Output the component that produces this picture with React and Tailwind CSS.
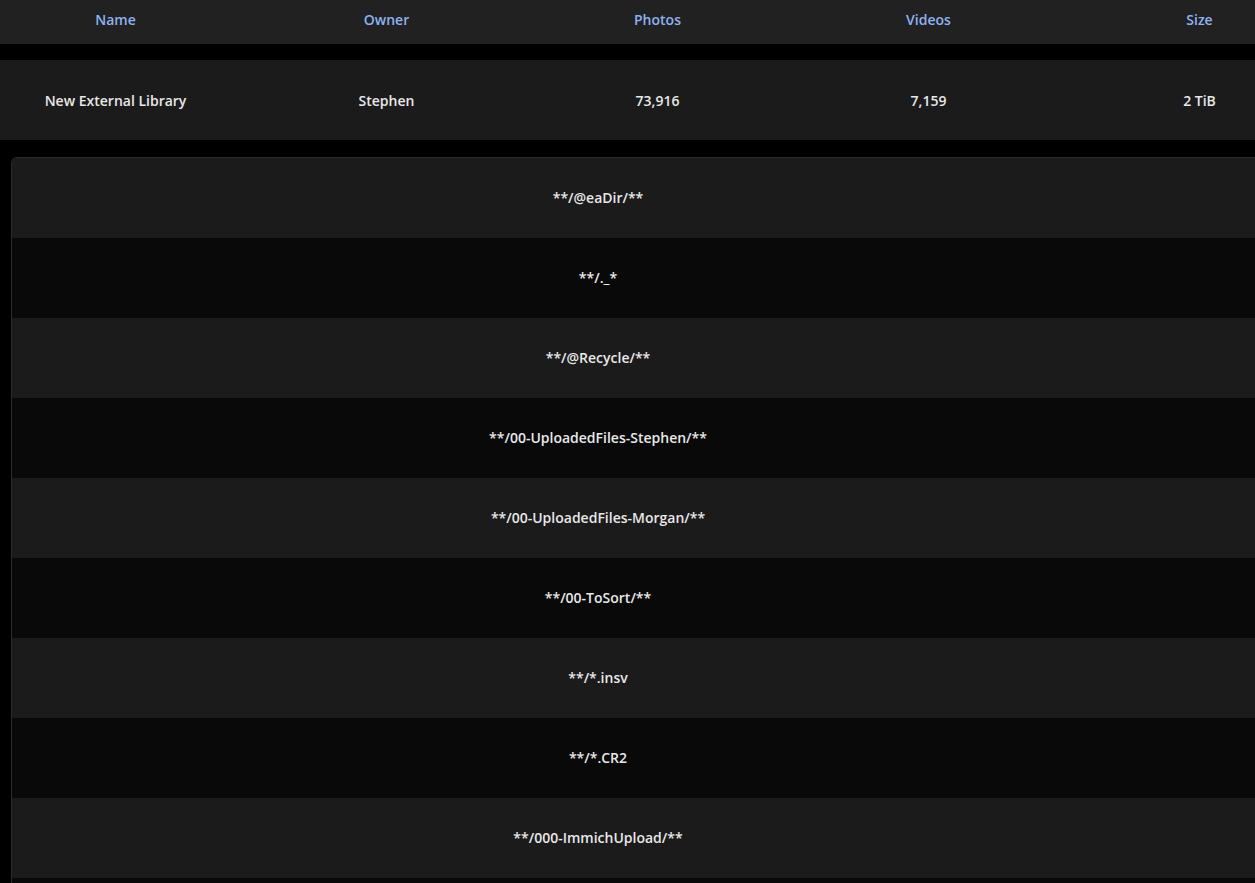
import React from "react";

const library = {
  name: "New External Library",
  owner: "Stephen",
  photos: "73,916",
  videos: "7,159",
  size: "2 TiB",
};

const patterns = [
  "**/@eaDir/**",
  "**/._*",
  "**/@Recycle/**",
  "**/00-UploadedFiles-Stephen/**",
  "**/00-UploadedFiles-Morgan/**",
  "**/00-ToSort/**",
  "**/*.insv",
  "**/*.CR2",
  "**/000-ImmichUpload/**",
];

const headers = ["Name", "Owner", "Photos", "Videos", "Size"];

export default function App() {
  return (
    <div
      className="h-screen overflow-hidden bg-black text-[#e8e8e8]"
      style={{ fontFamily: '"Open Sans", "Noto Sans", sans-serif' }}
    >
      <div className="-ml-[20px] w-[1355px]">
        {/* table header */}
        <div className="grid h-[44px] grid-cols-5 items-center bg-[#212121] pb-[4px] text-center text-sm font-semibold text-[#8fb2f0]">
          {headers.map((h) => (
            <div key={h}>{h}</div>
          ))}
        </div>

        {/* library row */}
        <div className="mt-4 grid h-[80px] grid-cols-5 items-center bg-[#1b1b1b] pt-[2px] text-center text-sm font-semibold">
          <div>{library.name}</div>
          <div>{library.owner}</div>
          <div>{library.photos}</div>
          <div>{library.videos}</div>
          <div>{library.size}</div>
        </div>

        {/* exclusion patterns */}
        <div className="ml-[31px] mt-[17px] overflow-hidden rounded-tl-md border-l border-t border-[#2a2a2a]">
          {patterns.map((p, i) => (
            <div
              key={p}
              className={
                "flex h-[80px] items-center text-sm font-semibold " +
                (i % 2 === 0 ? "bg-[#1b1b1b]" : "bg-[#090909]")
              }
            >
              <div className="w-[1172px] text-center">{p}</div>
            </div>
          ))}
          <div className="h-[80px] bg-[#090909]" />
        </div>
      </div>
    </div>
  );
}
